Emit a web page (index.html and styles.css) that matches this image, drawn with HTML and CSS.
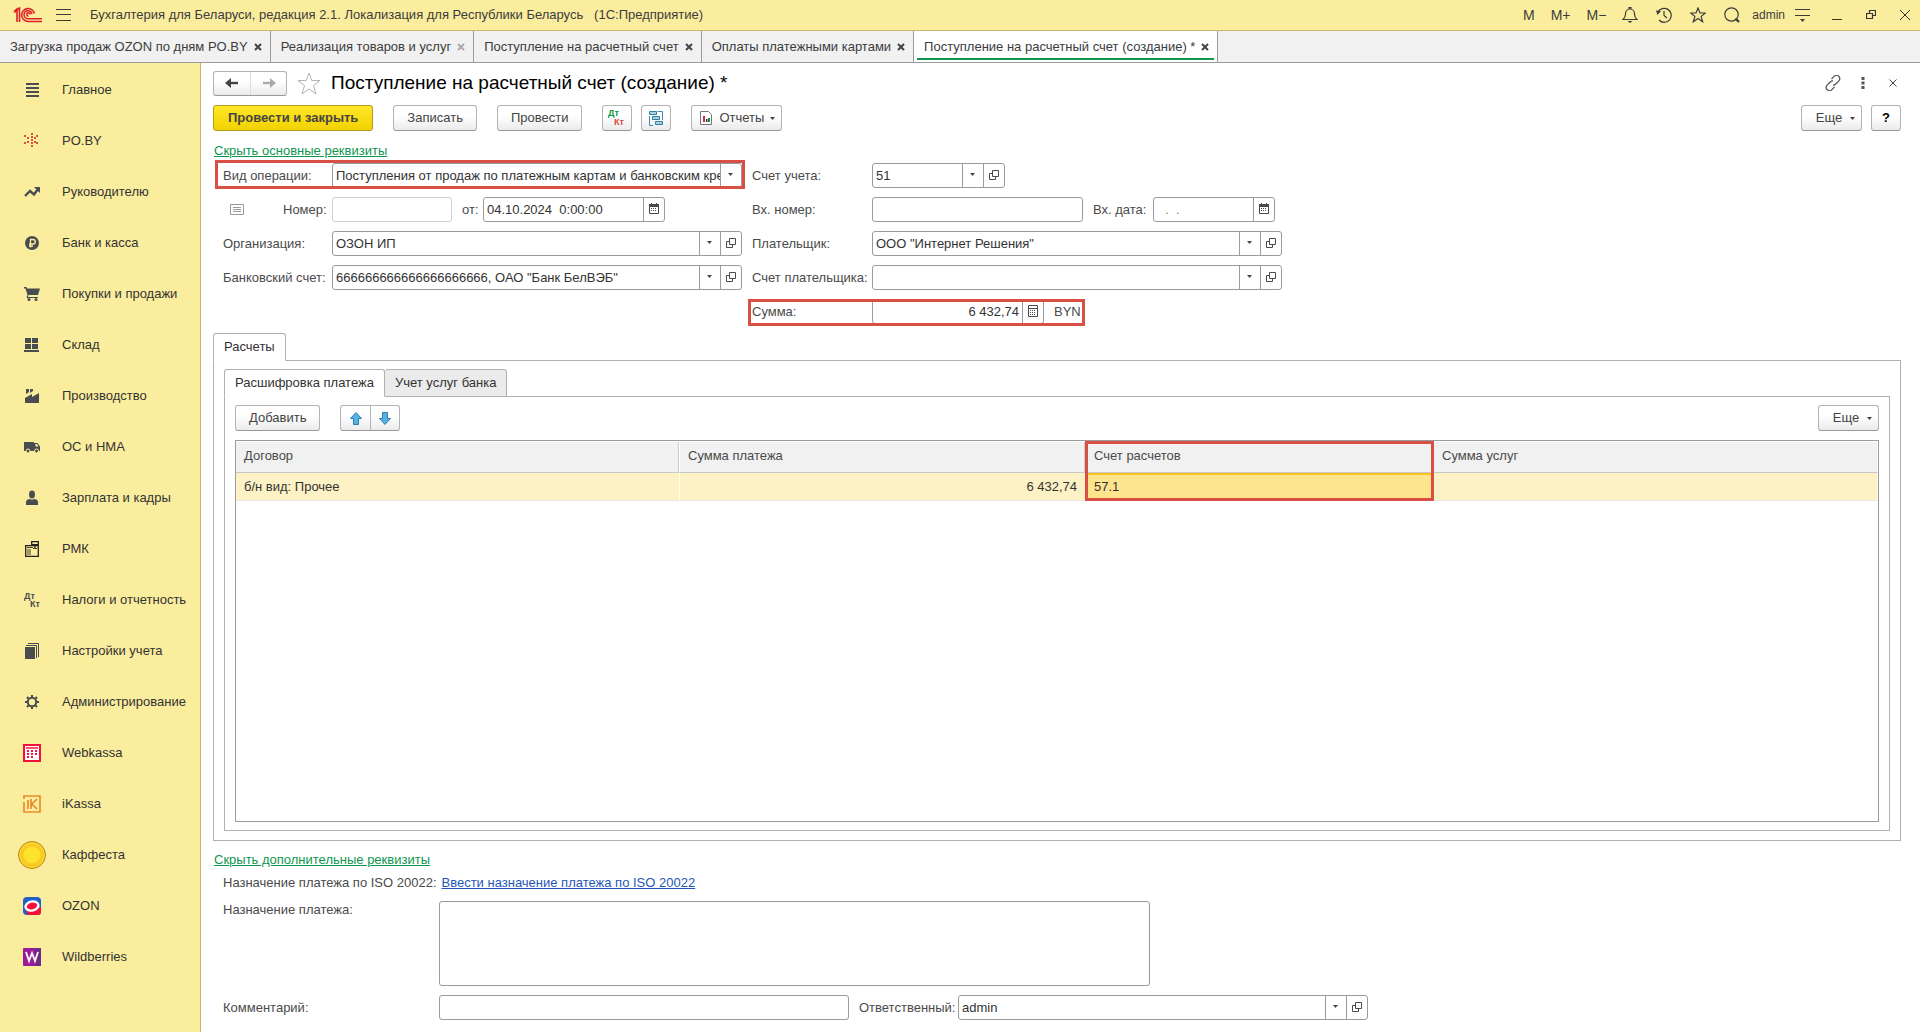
FILE: index.html
```html
<!DOCTYPE html>
<html lang="ru">
<head>
<meta charset="utf-8">
<title>Поступление на расчетный счет (создание)</title>
<link rel="stylesheet" href="styles.css">
</head>
<body>
<svg class="defs" aria-hidden="true">
  <symbol id="i-open" viewBox="0 0 10 10"><path d="M3.5.5h6v6h-6zM3.5 3.5h-3v6h6v-3" fill="none" stroke="#4a4a4a"/></symbol>
  <symbol id="i-cal" viewBox="0 0 10 11"><path d="M0 1h10v3H0z" fill="#4a4a4a"/><path d="M.5 1.5h9v9h-9zM2.5 0v2M7.500 0v2" fill="none" stroke="#4a4a4a"/><path d="M2 5.500h6M2 7.500h6" stroke="#4a4a4a" stroke-dasharray="1 1"/></symbol>
  <symbol id="i-calc" viewBox="0 0 10 12"><path d="M.5.5h9v11h-9zM1 3.500h8" fill="none" stroke="#4a4a4a"/><path d="M2 5.500h6M2 7.500h6M2 9.500h6" stroke="#4a4a4a" stroke-dasharray="1 1"/></symbol>
  <symbol id="i-down" viewBox="0 0 5 3"><path d="M0 0h5L2.500 3z" fill="#444"/></symbol>
  <symbol id="i-x" viewBox="0 0 8 8"><path d="M1 1l6 6M7 1L1 7" stroke="currentColor" stroke-width="2"/></symbol>
</svg>

<header class="titlebar">
  <svg class="logo" viewBox="0 0 30 16" width="30" height="16"><g fill="none" stroke="#e0202a" stroke-width="1.600"><path d="M1 4.500L4 2v13"/><path d="M1.500 5.500L6.500 1V15"/><path d="M21.500 6.500A6.500 6.500 0 1 0 15.500 14.500H29"/><path d="M19 7A4 4 0 1 0 15.500 11.700H29"/><path d="M17 7.500a1.600 1.600 0 1 0-1.500 1.500"/></g></svg>
  <button class="tool" aria-label="Меню"><svg width="15" height="12" viewBox="0 0 15 12"><path d="M0 .5h15M0 5.500h15M0 11.500h15" stroke="#3c3c3c"/></svg></button>
  <span class="app-name">Бухгалтерия для Беларуси, редакция 2.1. Локализация для Республики Беларусь &nbsp; (1С:Предприятие)</span>
  <div class="title-tools">
    <div class="mems"><button>M</button><button>M+</button><button>M−</button></div>
    <button class="tool" aria-label="Уведомления"><svg width="16" height="16" viewBox="0 0 16 16"><path d="M1 12.500C3 11 3.500 9.500 3.500 7c0-3 2-5 4.500-5s4.500 2 4.500 5c0 2.500.5 4 2.500 5.500zM7 2V.5h2V2" fill="none" stroke="#3c3c3c" stroke-width="1.200"/><path d="M5.500 14h5L8 16z" fill="#3c3c3c"/></svg></button>
    <button class="tool" aria-label="История"><svg width="16" height="16" viewBox="0 0 16 16"><path d="M1.800 5.500A7 7 0 1 1 3 13M8 4v4.500l3 2.500" fill="none" stroke="#3c3c3c" stroke-width="1.200"/><path d="M0 3.500l5 .5-3.500 4z" fill="#3c3c3c"/></svg></button>
    <button class="tool" aria-label="Избранное"><svg width="16" height="16" viewBox="0 0 16 16"><path d="M8 1l2 5h5.300l-4.200 3.400 1.600 5.400L8 11.600l-4.700 3.200 1.600-5.400L.7 6H6z" fill="none" stroke="#3c3c3c" stroke-width="1.200"/></svg></button>
    <button class="tool" aria-label="Поиск"><svg width="16" height="16" viewBox="0 0 16 16"><circle cx="7.500" cy="7.500" r="6.700" fill="none" stroke="#3c3c3c" stroke-width="1.200"/><path d="M11.500 11.500l3.500 3.500" stroke="#3c3c3c" stroke-width="2.400"/></svg></button>
    <a href="#" class="user">admin</a>
    <button class="tool" aria-label="Сервис"><svg width="15" height="13" viewBox="0 0 15 13"><path d="M0 .5h15M0 6.500h15" stroke="#3c3c3c"/><path d="M5 10h5l-2.500 3z" fill="#3c3c3c"/></svg></button>
    <div class="win">
      <button class="tool" aria-label="Свернуть"><svg width="10" height="10" viewBox="0 0 10 10"><path d="M0 9.500h10" stroke="#333"/></svg></button>
      <button class="tool" aria-label="Восстановить"><svg width="10" height="10" viewBox="0 0 10 10"><path d="M.5 3.500h6v5h-6zM3.500 3V.5h6v5H7" fill="none" stroke="#333" stroke-width="1.200"/></svg></button>
      <button class="tool" aria-label="Закрыть"><svg width="10" height="10" viewBox="0 0 10 10"><path d="M0 0l10 10M10 0L0 10" stroke="#333"/></svg></button>
    </div>
  </div>
</header>

<nav class="tabs" aria-label="Открытые окна">
  <div class="tab"><a href="#">Загрузка продаж OZON по дням PO.BY</a><button aria-label="Закрыть"><svg width="8" height="8"><use href="#i-x"/></svg></button></div>
  <div class="tab"><a href="#">Реализация товаров и услуг</a><button class="dim" aria-label="Закрыть"><svg width="8" height="8"><use href="#i-x"/></svg></button></div>
  <div class="tab"><a href="#">Поступление на расчетный счет</a><button aria-label="Закрыть"><svg width="8" height="8"><use href="#i-x"/></svg></button></div>
  <div class="tab"><a href="#">Оплаты платежными картами</a><button aria-label="Закрыть"><svg width="8" height="8"><use href="#i-x"/></svg></button></div>
  <div class="tab active"><a href="#">Поступление на расчетный счет (создание) *</a><button aria-label="Закрыть"><svg width="8" height="8"><use href="#i-x"/></svg></button></div>
</nav>

<div class="workspace">
<nav class="sidebar" aria-label="Разделы">
  <a href="#"><svg viewBox="0 0 16 16"><path d="M2 2h13M2 6h13M2 10h13M2 14h13" stroke="#4a4d50" stroke-width="2"/></svg>Главное</a>
  <a href="#"><svg viewBox="0 0 16 16"><path d="M7 0h2v2H7zM7 3h2v2H7zM7 6h2v2H7zM7 9h2v2H7zM7 12h2v2H7zM0 2h2v2H0zM0 9h2v2H0zM3 4h2v2H3zM3 8h2v2H3zM10 4h2v2h-2zM10 8h2v2h-2zM12 2h2v2h-2zM12 9h2v2h-2z" fill="#d5523f"/></svg>PO.BY</a>
  <a href="#"><svg viewBox="0 0 16 16"><path d="M1 12l5-5 4 3.500L14 5" fill="none" stroke="#4a4d50" stroke-width="2.400"/><path d="M10 3h6v6z" fill="#4a4d50"/></svg>Руководителю</a>
  <a href="#"><svg viewBox="0 0 16 16"><circle cx="8" cy="8" r="7" fill="#4a4d50"/><path d="M6.500 12.500v-8H9a2.200 2.200 0 0 1 0 4.500H5M5 11h4" fill="none" stroke="#fbed9e" stroke-width="1.300"/></svg>Банк и касса</a>
  <a href="#"><svg viewBox="0 0 16 16"><path d="M0 1h2.500l.8 1.500H16L14 9H4.500L4 11h10v1H2.500l1-3L1.500 2.500H0z" fill="#4a4d50"/><circle cx="5" cy="13.500" r="1.500" fill="#4a4d50"/><circle cx="12" cy="13.500" r="1.500" fill="#4a4d50"/></svg>Покупки и продажи</a>
  <a href="#"><svg viewBox="0 0 16 16"><path d="M1 1h6v5H1zM8 1h6v5H8zM1 7h6v5H1zM8 7h6v5H8zM0 13h15v2H0z" fill="#4a4d50"/></svg>Склад</a>
  <a href="#"><svg viewBox="0 0 16 16"><path d="M1 15V10l7-4v3l7-4v10zM2 1h3v3L2 6zM6 1h3v2L6 5z" fill="#4a4d50"/></svg>Производство</a>
  <a href="#"><svg viewBox="0 0 16 16"><path d="M0 3h10v1h3.500L16 7.500V12H0z" fill="#4a4d50"/><path d="M11.500 5H13l1.500 2.500h-3z" fill="#fbed9e"/><g fill="#4a4d50" stroke="#fbed9e"><circle cx="4" cy="12" r="2"/><circle cx="12.500" cy="12" r="2"/></g></svg>ОС и НМА</a>
  <a href="#"><svg viewBox="0 0 16 16"><ellipse cx="8" cy="4.500" rx="3" ry="4" fill="#4a4d50"/><path d="M2 15v-3c0-2 2-3 4-3 1.500 1 2.500 1 4 0 2 0 4 1 4 3v3z" fill="#4a4d50"/></svg>Зарплата и кадры</a>
  <a href="#"><svg viewBox="0 0 16 16"><path d="M1.700 4.700h12.600v10.600H1.700zM7.700.7h6.600v3H7.700zM11 4v3" fill="none" stroke="#222" stroke-width="1.300"/><path d="M3 6.500h6M3 9h4M3 11h4M3 13h4M9 7.500h4" stroke="#4a4020" stroke-width="1.200"/></svg>РМК</a>
  <a href="#"><svg viewBox="0 0 16 16"><g fill="#4a4d50" class="dk"><text x="0" y="7">Дт</text><text x="6" y="15">Кт</text></g></svg>Налоги и отчетность</a>
  <a href="#"><svg viewBox="0 0 16 16"><path d="M1 4h10v12H1z" fill="#4a4d50"/><path d="M2 2.500h10.500V15M4 .5h10.500V14" fill="none" stroke="#4a4d50"/></svg>Настройки учета</a>
  <a href="#"><svg viewBox="0 0 16 16"><circle cx="8" cy="8" r="4.200" fill="none" stroke="#4a4d50" stroke-width="2"/><path d="M8 1v2.500M8 12.500V15M1 8h2.500M12.500 8H15M3 3l2 2M11 11l2 2M3 13l2-2M11 5l2-2" stroke="#4a4d50" stroke-width="2"/></svg>Администрирование</a>
  <a href="#"><svg viewBox="0 0 18 18" class="i18"><rect x="1" y="1" width="16" height="16" fill="#fff" stroke="#f5103c" stroke-width="2"/><path d="M3 4h12" stroke="#f5103c" stroke-width="1.500"/><path d="M4 7h10M4 10h10M4 13h6" stroke="#f5103c" stroke-width="2" stroke-dasharray="2 2"/></svg>Webkassa</a>
  <a href="#"><svg viewBox="0 0 18 18" class="i18"><path d="M1 4V1h16v16H1V7M5 5v9M8 4v10M14 4L9 9l5 5" fill="none" stroke="#e98b2d" stroke-width="1.700"/></svg>iKassa</a>
  <a href="#"><svg viewBox="0 0 28 28" class="i28"><circle cx="14" cy="14" r="13.500" fill="#fcd22f" stroke="#b18c1a"/><circle cx="14" cy="14" r="10.500" fill="#fcd022" stroke="#f3c31d"/><circle cx="14" cy="14" r="8" fill="#ffe22e"/></svg>Каффеста</a>
  <a href="#"><svg viewBox="0 0 18 18" class="i18"><rect width="18" height="18" rx="4" fill="#2060c8"/><path d="M3 14l15-4v5a3 3 0 0 1-3 3H5z" fill="#f5103c"/><ellipse cx="9" cy="9" rx="6.500" ry="4.500" transform="rotate(-14 9 9)" fill="#f5103c" stroke="#fff" stroke-width="2.400"/></svg>OZON</a>
  <a href="#"><svg viewBox="0 0 18 18" class="i18"><rect width="18" height="18" rx="1" fill="#9b1a9c"/><path d="M12 0h6v18h-6z" fill="#6a2c86"/><path d="M3 4l3 9 3-8 3 8 3-9" fill="none" stroke="#fff" stroke-width="1.800"/></svg>Wildberries</a>
</nav>

<main class="form">
  <div class="heading">
    <div class="pair nav-pair">
      <button aria-label="Назад"><svg width="14" height="10" viewBox="0 0 14 10"><path d="M2 5h11" stroke="#444" stroke-width="2.400"/><path d="M6 0v10L0 5z" fill="#444"/></svg></button>
      <button aria-label="Вперед"><svg width="14" height="10" viewBox="0 0 14 10"><path d="M1 5h11" stroke="#aaa" stroke-width="2.400"/><path d="M8 0v10l6-5z" fill="#aaa"/></svg></button>
    </div>
    <button class="tool" aria-label="В избранное"><svg width="24" height="23" viewBox="0 0 24 23"><path d="M12 1l2.800 7.500H23l-6.500 5L19 22l-7-5-7 5 2.500-8.500L1 8.500h8.200z" fill="#fff" stroke="#b4b4b4"/></svg></button>
    <h1>Поступление на расчетный счет (создание) *</h1>
    <div class="heading-tools">
      <button class="tool" aria-label="Ссылка"><svg width="16" height="16" viewBox="0 0 16 16"><g fill="none" stroke="#555" stroke-width="1.300"><path d="M6.500 4l2.600-2.600a3.200 3.200 0 0 1 4.800 4.500L10.500 9.300a3 3 0 0 1-2.500.7M9.500 12l-2.600 2.600a3.200 3.200 0 0 1-4.800-4.500L5.500 6.700A3 3 0 0 1 8 6"/></g></svg></button>
      <button class="tool" aria-label="Действия"><svg width="4" height="12" viewBox="0 0 4 12"><path d="M.5 0h3v3h-3zM.5 4.500h3v3h-3zM.5 9h3v3h-3z" fill="#555"/></svg></button>
      <button class="tool" aria-label="Закрыть форму"><svg width="8" height="8" viewBox="0 0 8 8"><path d="M.5.5l7 7M7.500.5l-7 7" stroke="#444"/></svg></button>
    </div>
  </div>

  <div class="commands">
    <button class="btn primary">Провести и закрыть</button>
    <button class="btn">Записать</button>
    <button class="btn">Провести</button>
    <div class="icon-btns">
      <button class="btn square" aria-label="Проводки"><svg width="18" height="18" viewBox="0 0 18 18"><g class="dk"><text x="0" y="7" fill="#0a9646">Дт</text><text x="6" y="16" fill="#d8493c">Кт</text></g></svg></button>
      <button class="btn square" aria-label="Структура подчиненности"><svg width="14" height="15" viewBox="0 0 14 15"><path d="M.5 5v9.500H4M8.500.5h5V9" fill="none" stroke="#3c8cab"/><g fill="#a9cfe0" stroke="#2f7fa0"><path d="M.5.500h7v3h-7zM3.500 5.500h7v3h-7zM6.500 10.500h7v3h-7z"/></g></svg></button>
    </div>
    <button class="btn menu reports"><svg width="12" height="14" viewBox="0 0 12 14"><path d="M.5.5h8l3 3v10H.5z" fill="#fff" stroke="#777"/><path d="M3 5h2v6H3z" fill="#d02c3c"/><path d="M6 8h1.500v3H6z" fill="#333"/><path d="M8 7h2v4H8z" fill="#0a9646"/></svg>Отчеты<svg width="5" height="3"><use href="#i-down"/></svg></button>
    <div class="right-btns">
      <button class="btn menu">Еще<svg width="5" height="3"><use href="#i-down"/></svg></button>
      <button class="btn square">?</button>
    </div>
  </div>

  <a href="#" class="toggle">Скрыть основные реквизиты</a>

  <div class="props">
    <div class="cell marked m-op"><label for="op">Вид операции:</label>
      <div class="field wide"><select id="op"><option>Поступления от продаж по платежным картам и банковским кредитам</option></select><span class="fb"><svg width="5" height="3"><use href="#i-down"/></svg></span></div></div>
    <div class="cell right"><label for="acc">Счет учета:</label>
      <div class="field account"><input id="acc" value="51"><button aria-label="Выбрать"><svg width="5" height="3"><use href="#i-down"/></svg></button><button aria-label="Открыть"><svg width="10" height="10"><use href="#i-open"/></svg></button></div></div>

    <div class="cell"><svg class="list" width="14" height="11" viewBox="0 0 14 11"><path d="M.5.5h13v10H.5zM3 3.500h8M3 5.500h8M3 7.500h8" fill="none" stroke="#999"/></svg><label for="num" class="num-label">Номер:</label>
      <div class="field number"><input id="num"></div><label for="dt" class="from-label">от:</label>
      <div class="field date"><input id="dt" value="04.10.2024  0:00:00"><button aria-label="Календарь"><svg width="10" height="11"><use href="#i-cal"/></svg></button></div></div>
    <div class="cell right"><label for="innum">Вх. номер:</label>
      <div class="field innum"><input id="innum"></div><label for="indt" class="indate-label">Вх. дата:</label>
      <div class="field indate"><input id="indt" class="mask" value="  .  ."><button aria-label="Календарь"><svg width="10" height="11"><use href="#i-cal"/></svg></button></div></div>

    <div class="cell"><label for="org">Организация:</label>
      <div class="field wide"><input id="org" value="ОЗОН ИП"><button aria-label="Выбрать"><svg width="5" height="3"><use href="#i-down"/></svg></button><button aria-label="Открыть"><svg width="10" height="10"><use href="#i-open"/></svg></button></div></div>
    <div class="cell right"><label for="payer">Плательщик:</label>
      <div class="field wide"><input id="payer" value="ООО &quot;Интернет Решения&quot;"><button aria-label="Выбрать"><svg width="5" height="3"><use href="#i-down"/></svg></button><button aria-label="Открыть"><svg width="10" height="10"><use href="#i-open"/></svg></button></div></div>

    <div class="cell"><label for="bank">Банковский счет:</label>
      <div class="field wide"><input id="bank" value="666666666666666666666, ОАО &quot;Банк БелВЭБ&quot;"><button aria-label="Выбрать"><svg width="5" height="3"><use href="#i-down"/></svg></button><button aria-label="Открыть"><svg width="10" height="10"><use href="#i-open"/></svg></button></div></div>
    <div class="cell right"><label for="pacc">Счет плательщика:</label>
      <div class="field wide"><input id="pacc"><button aria-label="Выбрать"><svg width="5" height="3"><use href="#i-down"/></svg></button><button aria-label="Открыть"><svg width="10" height="10"><use href="#i-open"/></svg></button></div></div>

    <div class="cell right marked m-sum"><label for="sum">Сумма:</label>
      <div class="field sum"><input id="sum" class="num" value="6 432,74"><button aria-label="Калькулятор"><svg width="10" height="12"><use href="#i-calc"/></svg></button></div><span class="cur">BYN</span></div>
  </div>

  <section class="pages outer">
    <div class="page-tabs"><button class="on">Расчеты</button></div>
    <div class="page">
      <section class="pages">
        <div class="page-tabs"><button class="on">Расшифровка платежа</button><button>Учет услуг банка</button></div>
        <div class="page inner">
          <div class="commands">
            <button class="btn">Добавить</button>
            <div class="pair">
              <button aria-label="Вверх"><svg width="12" height="13" viewBox="0 0 12 13"><path d="M6 .5L11.500 6.500H8.500v6h-5v-6h-3z" fill="#58b0e4" stroke="#2a7fae"/></svg></button>
              <button aria-label="Вниз"><svg width="12" height="13" viewBox="0 0 12 13"><path d="M6 12.500L.5 6.500h3v-6h5v6h3z" fill="#58b0e4" stroke="#2a7fae"/></svg></button>
            </div>
            <div class="right-btns"><button class="btn menu">Еще<svg width="5" height="3"><use href="#i-down"/></svg></button></div>
          </div>
          <div class="grid-box">
            <table>
              <colgroup><col class="c1"><col class="c2"><col class="c3"><col></colgroup>
              <thead><tr><th>Договор</th><th>Сумма платежа</th><th class="marked m-col">Счет расчетов</th><th>Сумма услуг</th></tr></thead>
              <tbody><tr><td>б/н вид: Прочее</td><td class="num">6 432,74</td><td class="current">57.1</td><td></td></tr></tbody>
            </table>
          </div>
        </div>
      </section>
    </div>
  </section>

  <a href="#" class="toggle more">Скрыть дополнительные реквизиты</a>
  <div class="extra">
    <div class="line iso"><span>Назначение платежа по ISO 20022:</span><a href="#">Ввести назначение платежа по ISO 20022</a></div>
    <div class="line purpose"><label for="purpose">Назначение платежа:</label><textarea id="purpose"></textarea></div>
    <div class="line"><label for="comment">Комментарий:</label><div class="field wide"><input id="comment"></div><label for="resp" class="resp-label">Ответственный:</label>
      <div class="field wide"><input id="resp" value="admin"><button aria-label="Выбрать"><svg width="5" height="3"><use href="#i-down"/></svg></button><button aria-label="Открыть"><svg width="10" height="10"><use href="#i-open"/></svg></button></div></div>
  </div>
</main>
</div>
</body>
</html>
```
FILE: styles.css
```css
* { box-sizing: border-box; }
body {
  margin: 0;
  min-height: 100vh;
  display: flex;
  flex-direction: column;
  font: 13px/16px "Liberation Sans", Arial, sans-serif;
  color: #4a4a4a;
  background: #fff;
}
button, input, select, textarea { font: inherit; color: inherit; margin: 0; }
button { border: 0; padding: 0; background: none; display: inline-flex; align-items: center; justify-content: center; }
svg { flex: none; display: block; }
.defs { display: none; }
.dk text { font: bold 9px "Liberation Sans", Arial, sans-serif; }

/* Title bar */
.titlebar {
  display: flex;
  align-items: center;
  height: 31px;
  padding: 0 10px 0 13px;
  background: #fbed9e;
  border-bottom: 1px solid #cbb866;
}
.logo { margin-right: 13px; }
.app-name { margin-left: 19px; color: #3c3c3c; white-space: nowrap; }
.title-tools { margin-left: auto; display: flex; align-items: center; gap: 18px; }
.mems { display: flex; gap: 16px; margin-right: -2px; }
.mems button { font-size: 14px; color: #3c3c3c; }
.user { font-size: 12px; color: #3c3c3c; text-decoration: none; margin: 0 -8px 0 -6px; }
.win { display: flex; gap: 24px; margin-left: 4px; }

/* Window tabs */
.tabs { display: flex; height: 32px; background: #f1f1f1; border-bottom: 1px solid #9b9b9b; }
.tab { display: flex; align-items: center; gap: 6px; padding: 0 8px 0 10px; border-right: 1px solid #9b9b9b; }
.tab a { color: #3c3c3c; text-decoration: none; white-space: nowrap; }
.tab button { color: #444; }
.tab button.dim { color: #aaa; }
.tab.active { background: #fff; position: relative; }
.tab.active::after { content: ""; position: absolute; left: 3px; right: 3px; bottom: 2px; height: 2px; background: #0f9650; }

.workspace { flex: 1; display: flex; }

/* Sections panel */
.sidebar { flex: none; width: 201px; padding-top: 1px; background: #fbed9e; border-right: 1px solid #cbb866; }
.sidebar a {
  display: flex;
  align-items: center;
  height: 51px;
  padding-left: 24px;
  gap: 22px;
  color: #333;
  text-decoration: none;
  white-space: nowrap;
}
.sidebar svg { width: 16px; height: 16px; }
.sidebar .i18 { width: 18px; height: 18px; margin: 0 -1px; }
.sidebar .i28 { width: 28px; height: 28px; margin: 0 -6px; }

/* Form */
.form { flex: 1; min-width: 0; display: flex; flex-direction: column; padding: 8px 19px 12px 12px; }
.heading { display: flex; align-items: center; height: 24px; gap: 10px; }
h1 { margin: 0; font-size: 19px; line-height: 24px; font-weight: 400; color: #000; white-space: nowrap; }
.heading-tools { margin-left: auto; padding-right: 4px; display: flex; align-items: center; gap: 20px; }
.heading-tools .tool:last-child { margin-left: 4px; }

.pair { display: flex; height: 26px; border: 1px solid #b3b3b3; border-bottom-color: #999; border-radius: 3px; background: linear-gradient(#fff 40%, #ebebeb); }
.pair button { width: 29px; }
.pair button + button { border-left: 1px solid #b3b3b3; }
.nav-pair { height: 25px; }
.nav-pair button { width: 36px; }
.nav-pair button + button { border-color: #ddd; }

.btn {
  height: 26px;
  padding: 0 13px;
  color: #444;
  border: 1px solid #b3b3b3;
  border-bottom-color: #999;
  border-radius: 3px;
  background: linear-gradient(#fff 40%, #ebebeb);
  white-space: nowrap;
}
.primary { padding: 0 14px; font-weight: 700; border-color: #b09b1c; background: linear-gradient(#ffe629, #f2d200); }
.square { width: 30px; padding: 0; color: #000; font-weight: 700; }
.menu { gap: 8px; padding: 0 6px 0 14px; }
.commands .reports { padding-left: 8px; gap: 7px; }
.reports svg:last-child { margin-left: -1px; }
.commands { display: flex; gap: 20px; }
.icon-btns { display: flex; gap: 9px; }
.right-btns { display: flex; gap: 9px; margin-left: auto; }
.right-btns .menu { width: 61px; }
.form > .commands { margin-top: 10px; }

.toggle { align-self: flex-start; margin: 12px 0 0 1px; color: #0f9650; }

.props {
  display: grid;
  grid-template-columns: minmax(0, 519px) minmax(0, 530px);
  column-gap: 10px;
  row-gap: 9px;
  padding: 4px 0 0 10px;
}
.cell { display: flex; align-items: center; height: 25px; }
.cell label { width: 109px; flex: none; white-space: nowrap; }
.cell.right { grid-column: 2; }
.cell.right label { width: 120px; }
.cell .list { margin: 0 39px 0 7px; }
.cell label.num-label { width: 49px; }
.cell label.from-label { width: 31px; padding-left: 10px; }
.cell label.indate-label { width: 70px; padding-left: 10px; }

.field { display: flex; height: 25px; min-width: 0; border: 1px solid #9b9b9b; border-radius: 3px; background: #fff; }
.field input, .field select {
  flex: 1;
  width: 0;
  min-width: 0;
  padding: 0 3px;
  border: 0;
  outline: 0;
  background: none;
  appearance: none;
  color: #333;
}
.field button, .field .fb { width: 21px; padding: 0 1px 2px 0; border-left: 1px solid #9b9b9b; }
.field .fb { display: flex; align-items: center; justify-content: center; pointer-events: none; }
.field .num { text-align: right; }
.field input.mask { color: #c07a20; white-space: pre; padding-left: 4px; }
.field select { padding-right: 0; }
.wide { width: 410px; }
.account { width: 133px; }
.number { width: 120px; border-color: #d0d0d0; }
.date { width: 182px; }
.date input { white-space: pre; }
.innum { width: 211px; }
.indate { width: 122px; }
.sum { width: 172px; }
.cur { margin-left: 10px; }

/* Red attention frames laid over the fields */
.marked { position: relative; }
.marked::after { content: ""; position: absolute; border: 3px solid #d84f44; pointer-events: none; }
.m-op::after { inset: -3px -3px -1px -8px; }
.m-sum { justify-self: start; }
.m-sum::after { inset: 0 -4px -2px -4px; }
.m-col::after { inset: -1px -1px -29px -1px; z-index: 1; }

/* Pages */
.pages { flex: 1; display: flex; flex-direction: column; }
.outer { margin-top: 9px; }
.page-tabs { position: relative; display: flex; height: 28px; margin-bottom: -1px; }
.page-tabs button { padding: 0 10px; color: #333; border: 1px solid #b0b0b0; background: #ebebeb; border-radius: 3px 3px 0 0; }
.page-tabs button + button { border-left: 0; }
.page-tabs .on { background: #fff; border-bottom-color: #fff; }
.page { flex: 1; display: flex; flex-direction: column; border: 1px solid #b0b0b0; padding: 8px 10px 9px; }
.inner { padding: 8px 10px; }
.grid-box { flex: 1; margin-top: 9px; border: 1px solid #9b9b9b; }
table { width: 100%; table-layout: fixed; border-collapse: separate; border-spacing: 0; }
.c1 { width: 444px; }
.c2 { width: 406px; }
.c3 { width: 348px; }
th { height: 32px; padding: 0 8px 2px; text-align: left; font-weight: 400; background: #f1f1f1; border: 1px solid #fff; border-bottom: 1px solid #c8c8c8; border-left: 0; box-shadow: inset -1px 0 #ccc; }
th:last-child { box-shadow: none; }
td { height: 28px; padding: 0 8px; color: #333; background: #fdf2c5; border-right: 1px solid #fffbe8; border-bottom: 1px solid #e8e8e8; }
td.num { text-align: right; }
td.current { background: #ffe48e; border-top: 2px solid #f7c41c; border-bottom: 2px solid #f7c41c; }

/* Additional details */
.more { margin-top: 11px; }
.extra { padding: 7px 0 0 10px; }
.line { display: flex; align-items: center; }
.line label { width: 216px; flex: none; }
.line label.resp-label { width: 109px; padding-left: 10px; }
.iso { gap: 5px; }
.iso a { color: #1f57b8; }
.purpose { align-items: flex-start; margin: 10px 0 9px; }
.purpose label { line-height: 18px; }
textarea { width: 711px; height: 85px; resize: none; border: 1px solid #9b9b9b; border-radius: 3px; background: #fff; }
```
